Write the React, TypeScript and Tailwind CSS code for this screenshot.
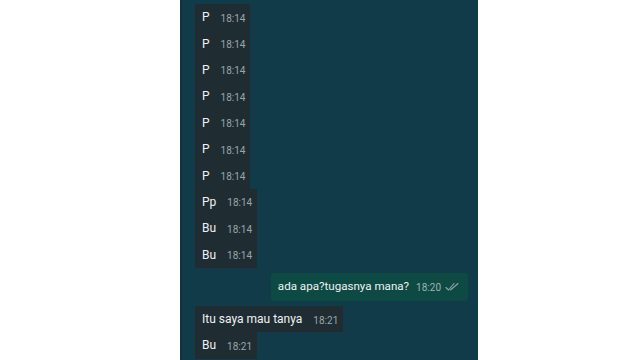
import React from "react";

type Msg = { text: string; time: string };

const incoming: Msg[] = [
  { text: "P", time: "18:14" },
  { text: "P", time: "18:14" },
  { text: "P", time: "18:14" },
  { text: "P", time: "18:14" },
  { text: "P", time: "18:14" },
  { text: "P", time: "18:14" },
  { text: "P", time: "18:14" },
  { text: "Pp", time: "18:14" },
  { text: "Bu", time: "18:14" },
  { text: "Bu", time: "18:14" },
];

const later: Msg[] = [
  { text: "Itu saya mau tanya", time: "18:21" },
  { text: "Bu", time: "18:21" },
];

function DoubleCheck() {
  return (
    <svg width="14" height="10" viewBox="0 0 14 10" fill="none" className="ml-[4px]">
      <path d="M1 5.5 L3.5 8 L9 1.5" stroke="#8fa3ab" strokeWidth="1.1" strokeLinecap="round" strokeLinejoin="round" />
      <path d="M5.5 8 L13 1.5" stroke="#8fa3ab" strokeWidth="1.1" strokeLinecap="round" strokeLinejoin="round" />
    </svg>
  );
}

function Incoming({ msg }: { msg: Msg }) {
  return (
    <div className="flex h-[26.4px]">
      <div className="flex items-center bg-[#1f2d33] pl-[7px] pr-[5px]">
        <span className="text-[12px] text-[#eef2f3]">{msg.text}</span>
        <span className="ml-[11px] mt-[2px] text-[10px] text-[#9aa6ab]">{msg.time}</span>
      </div>
    </div>
  );
}

export default function App() {
  return (
    <div className="h-[360px] w-[640px] bg-white overflow-hidden" style={{ fontFamily: "Roboto, 'Liberation Sans', sans-serif" }}>
      <div className="ml-[180px] h-full w-[298px] bg-[#123b4a] border-l-[2px] border-[#0e3240] pl-[13px] pt-[4px] flex flex-col">
        {/* incoming stack */}
        <div className="flex flex-col">
          {incoming.map((m, i) => (
            <Incoming key={i} msg={m} />
          ))}
        </div>

        {/* outgoing */}
        <div className="mt-[5px] flex justify-end pr-[10px]">
          <div className="flex items-center h-[28px] rounded-[3px] bg-[#0d4a44] pl-[7px] pr-[9px]">
            <span className="text-[11.6px] text-[#eef2f3]">ada apa?tugasnya mana?</span>
            <span className="ml-[7px] mt-[2px] text-[10px] text-[#9fb3b3]">18:20</span>
            <DoubleCheck />
          </div>
        </div>

        <div className="mt-[5px] flex flex-col">
          {later.map((m, i) => (
            <Incoming key={i} msg={m} />
          ))}
        </div>
      </div>
    </div>
  );
}
